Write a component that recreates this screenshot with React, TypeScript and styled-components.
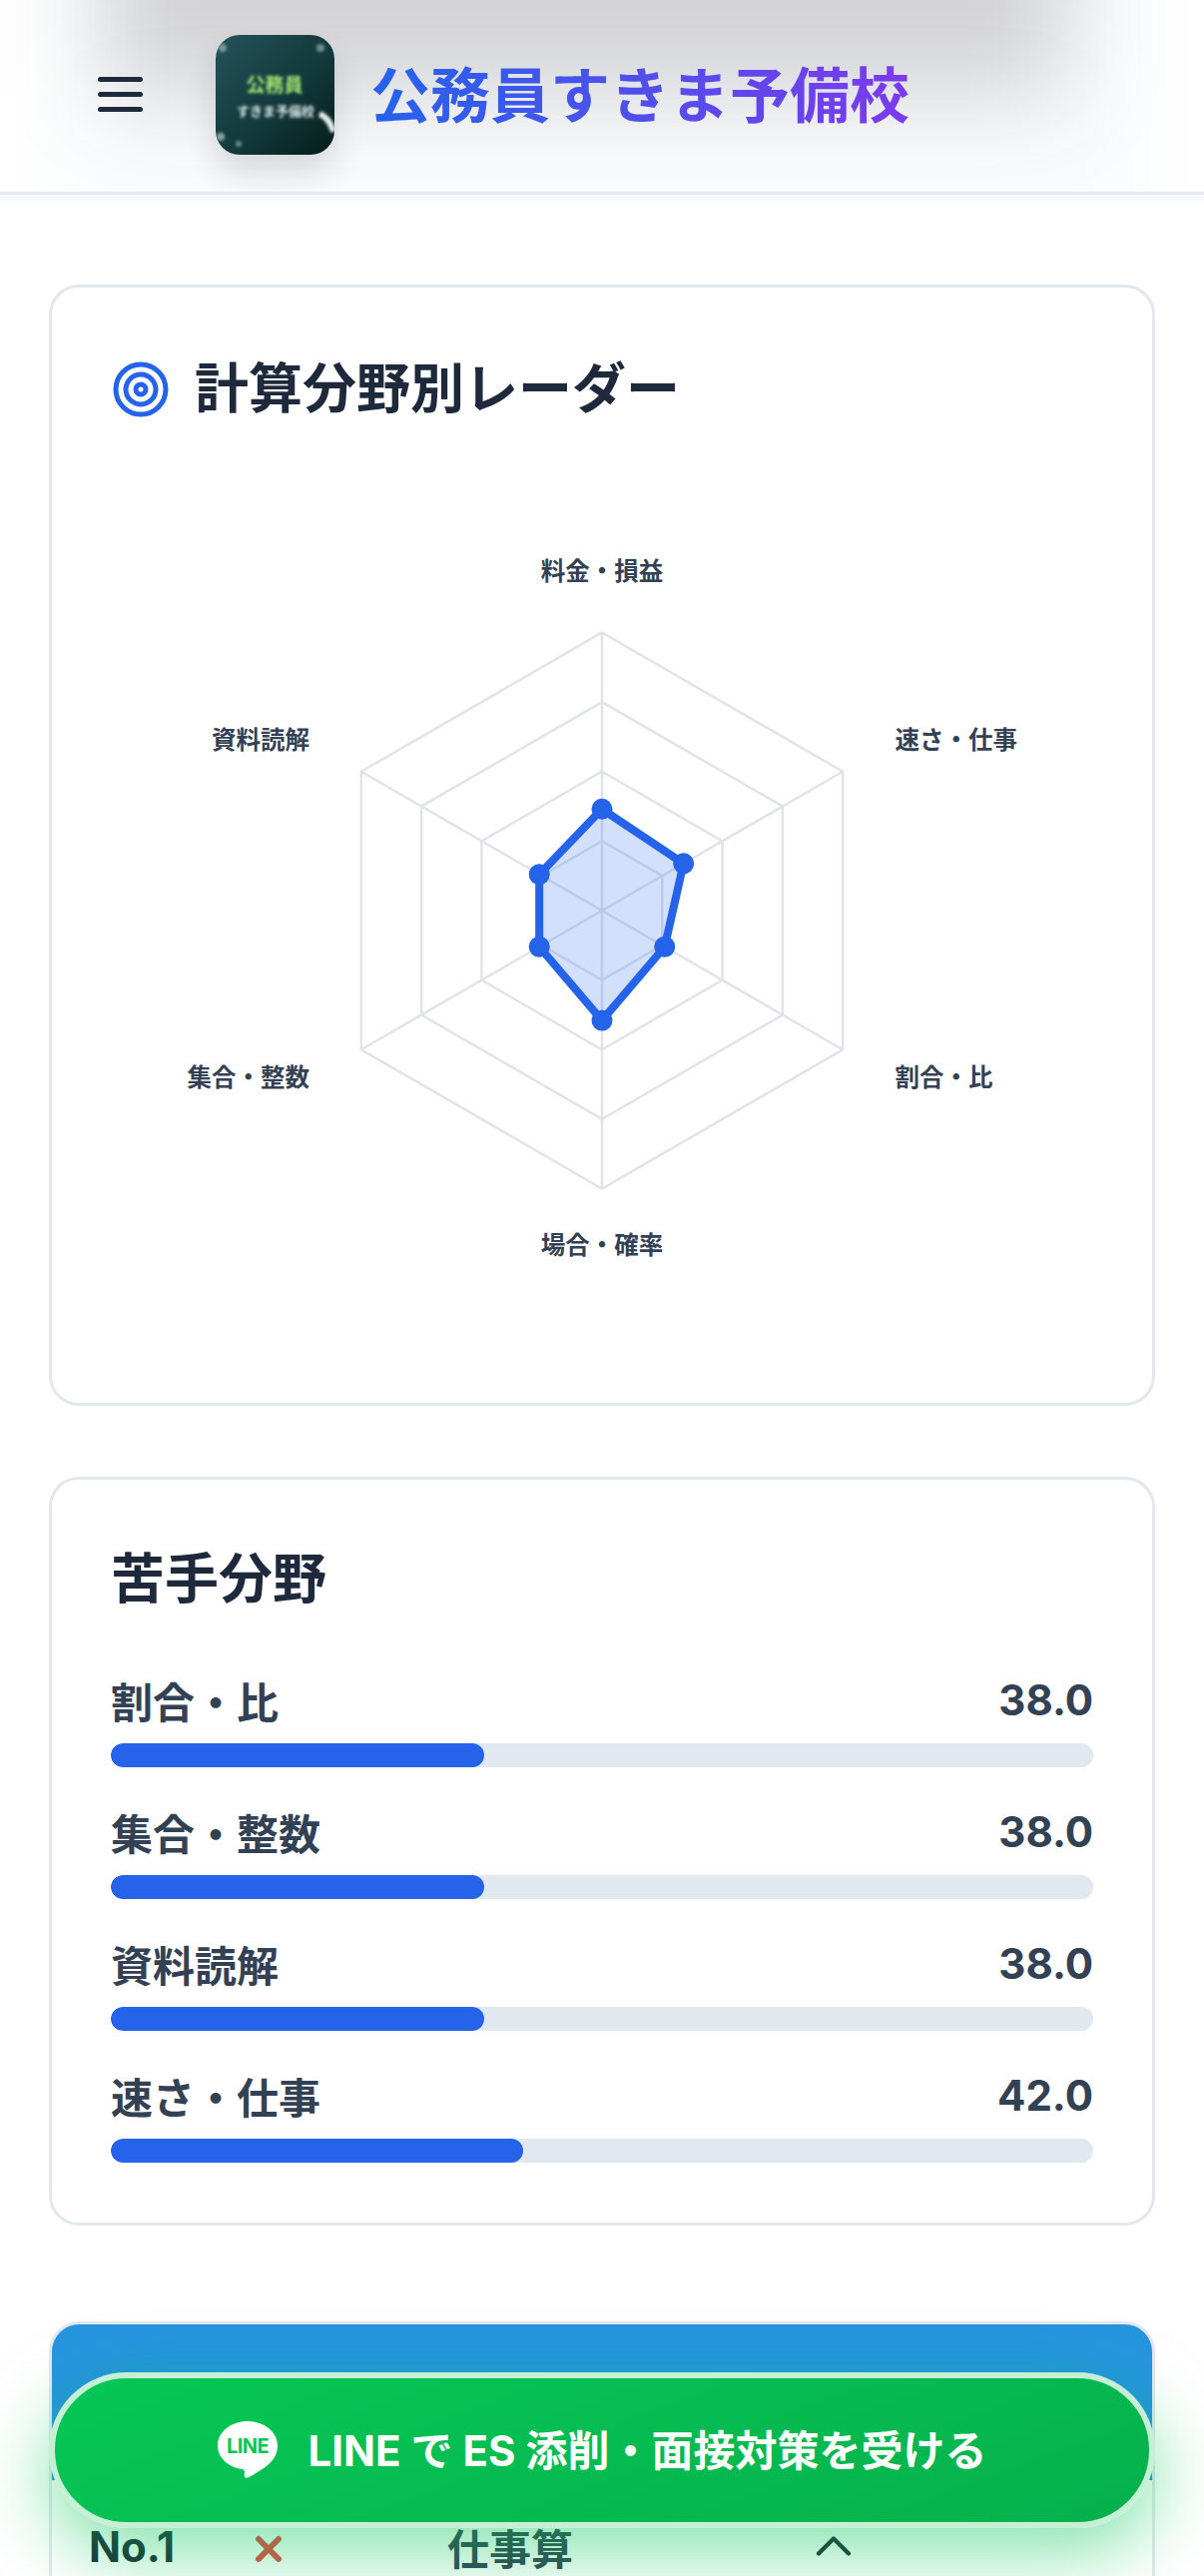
import React from "react";
import styled, { createGlobalStyle } from "styled-components";
import { ChevronUp, Target, X } from "lucide-react";

const FONT = `Inter, "Noto Sans CJK JP", "Noto Sans", sans-serif`;

const GlobalStyle = createGlobalStyle`
  * {
    box-sizing: border-box;
  }

  html,
  body {
    margin: 0;
    height: 100%;
    overflow: hidden;
    background: #ffffff;
  }

  body {
    font-family: ${FONT};
  }
`;

const Page = styled.div`
  position: relative;
  height: 2580px;
  overflow: hidden;
  background: #ffffff;
`;

const Header = styled.header`
  position: relative;
  height: 195px;
  padding: 0 0 3px 98px;
  display: flex;
  align-items: center;
  overflow: hidden;
  background: linear-gradient(90deg, #ffffff, #fafbfd 12%, #fafbfd 90%, #ffffff);
  border-bottom: 3px solid #e6e8ec;
`;

// blurred shadow of whatever scrolled up behind the header
const HeaderGlow = styled.div`
  position: absolute;
  top: -130px;
  left: 100px;
  right: 136px;
  height: 225px;
  background: rgba(40, 42, 48, 0.19);
  filter: blur(48px);
`;

const HeaderFade = styled.div`
  height: 14px;
  background: linear-gradient(#f6f7f8, #ffffff);
`;

const MenuButton = styled.button`
  position: relative;
  width: 45px;
  height: 35px;
  padding: 0;
  border: 0;
  background: none;
  display: flex;
  flex-direction: column;
  justify-content: space-between;

  span {
    display: block;
    height: 5px;
    border-radius: 3px;
    background: #1e293b;
  }
`;

const LogoBox = styled.div`
  position: relative;
  width: 119px;
  height: 120px;
  margin-left: 73px;
  border-radius: 24px;
  overflow: hidden;
  box-shadow: 0 18px 30px rgba(20, 30, 40, 0.14);
  flex-shrink: 0;

  svg {
    display: block;
  }
`;

const BrandTitle = styled.h1`
  position: relative;
  margin: 2px 0 0 36px;
  font-size: 60px;
  line-height: 1.2;
  font-weight: 700;
  white-space: nowrap;
  background: linear-gradient(90deg, #2563eb, #7c3aed);
  -webkit-background-clip: text;
  background-clip: text;
  color: transparent;
`;

const Main = styled.main`
  padding: 76px 49px 0;
`;

const Card = styled.section<{ $gap?: number }>`
  margin-top: ${(p) => p.$gap ?? 0}px;
  padding: 60px 59px;
  background: #ffffff;
  border: 3px solid #e2e8f0;
  border-radius: 30px;
`;

const CardTitleRow = styled.div`
  display: flex;
  align-items: center;
  gap: 24px;
  height: 84px;
  color: #2563eb;
`;

const CardTitle = styled.h2`
  margin: 0;
  font-size: 54px;
  line-height: 80px;
  font-weight: 700;
  color: #1e293b;
`;

const RadarSvg = styled.svg`
  display: block;
  width: 984px;
  height: 913px;
`;

const RadarLabel = styled.text`
  font-family: ${FONT};
  font-size: 24.5px;
  font-weight: 700;
  fill: #334155;
`;

const WeakList = styled.div`
  margin-top: 49px;
  display: flex;
  flex-direction: column;
  gap: 33px;
`;

const WeakHead = styled.div`
  display: flex;
  justify-content: space-between;
  align-items: center;
  height: 63px;
  font-size: 42px;
  font-weight: 700;
  color: #334155;
`;

const BarTrack = styled.div`
  margin-top: 12px;
  height: 24px;
  border-radius: 12px;
  overflow: hidden;
  background: #e2e8f0;
`;

const BarFill = styled.div`
  height: 100%;
  border-radius: 12px;
  background: #2563eb;
`;

const RankCard = styled.section`
  margin-top: 96px;
  height: 400px;
  background: #ffffff;
  border: 3px solid #e2e8f0;
  border-radius: 30px;
  overflow: hidden;
`;

const RankBanner = styled.div`
  height: 156px;
  background: #2694e0;
`;

const RankRow = styled.div`
  display: flex;
  align-items: center;
  height: 132px;
  padding-left: 37px;
  color: #1e293b;
`;

const RankNo = styled.span`
  width: 160px;
  font-size: 42px;
  font-weight: 700;
`;

const RankMark = styled.span`
  width: 199px;
  display: flex;
  margin-top: 6px;
  color: #ef4444;
`;

const RankName = styled.span`
  width: 357px;
  font-size: 42px;
  font-weight: 700;
  color: #334155;
`;

const RankToggle = styled.span`
  display: flex;
`;

const LineButton = styled.a`
  position: absolute;
  left: 49px;
  right: 49px;
  bottom: 48px;
  height: 156px;
  display: flex;
  align-items: center;
  justify-content: center;
  gap: 31px;
  border: 6px solid #c6f0d5;
  border-radius: 78px;
  background: linear-gradient(160deg, #06c755, #06b04c);
  box-shadow: 0 24px 72px rgba(6, 199, 85, 0.5);
  color: #ffffff;
  font-size: 42px;
  font-weight: 700;
  white-space: nowrap;

  span {
    margin-top: -6px;
  }
`;

const LineWord = styled.text`
  font-family: ${FONT};
  font-size: 20px;
  font-weight: 700;
  letter-spacing: -0.6px;
  fill: #06c755;
`;

const Logo = () => (
  <svg width="119" height="120" viewBox="0 0 119 120">
    <defs>
      <linearGradient id="logoBg" x1="0" y1="0" x2="1" y2="1">
        <stop offset="0" stopColor="#25525a" />
        <stop offset="0.55" stopColor="#12393b" />
        <stop offset="1" stopColor="#051d18" />
      </linearGradient>
      <filter id="soft">
        <feGaussianBlur stdDeviation="1.7" />
      </filter>
    </defs>
    <rect width="119" height="120" fill="url(#logoBg)" />
    <g filter="url(#soft)">
      <text x="59" y="57" textAnchor="middle" fontSize="19" fontWeight="700" fontFamily="Noto Sans CJK JP" fill="#a4ea72">
        公務員
      </text>
      <text x="60" y="81" textAnchor="middle" fontSize="13" fontWeight="700" fontFamily="Noto Sans CJK JP" fill="#dbe6e6">
        すきま予備校
      </text>
      <path d="M104 79 q10 4 14 18" fill="none" stroke="#e4eeec" strokeWidth="6" />
      <circle cx="7" cy="13" r="4" fill="#7d9a9a" />
      <circle cx="105" cy="13" r="4" fill="#6f8d8b" />
      <circle cx="5" cy="102" r="4" fill="#8aa5a3" />
      <circle cx="23" cy="109" r="3" fill="#6f8d8b" />
    </g>
  </svg>
);

const LineLogo = () => (
  <svg width="60" height="58" viewBox="0 0 60 58">
    <path
      d="M30 0C13.4 0 0 10.8 0 24.2c0 12 10.4 21.8 24.6 23.8 1 .2 2 .6 2.2 1.600.2.8 0 2.600-.1 4-.1 1 .1 4.200 3 3 4-1.700 14-7.500 20-12.400C56.400 39 60 32 60 24.200 60 10.800 46.600 0 30 0Z"
      fill="#ffffff"
    />
    <LineWord x="30" y="32" textAnchor="middle">LINE</LineWord>
  </svg>
);

const CX = 492;
const CY = 480;
const R = 278.5;

const axisPoint = (i: number, r: number) => {
  const a = (Math.PI / 3) * i;
  return [CX + r * Math.sin(a), CY - r * Math.cos(a)];
};

const ring = (r: number) =>
  [0, 1, 2, 3, 4, 5].map((i) => axisPoint(i, r).join(",")).join(" ");

// radius in px for each axis, clockwise from the top
const radarValues = [101.7, 94.3, 72.5, 110, 72.5, 72.5];

const radarLabels = [
  { text: "料金・損益", x: 492, y: 139.5, anchor: "middle" },
  { text: "速さ・仕事", x: 785.5, y: 308.5, anchor: "start" },
  { text: "割合・比", x: 785.5, y: 647, anchor: "start" },
  { text: "場合・確率", x: 492, y: 815, anchor: "middle" },
  { text: "集合・整数", x: 199, y: 647, anchor: "end" },
  { text: "資料読解", x: 199, y: 308.5, anchor: "end" },
];

const Radar = () => {
  const points = radarValues.map((r, i) => axisPoint(i, r));
  return (
    <RadarSvg viewBox="0 0 984 913">
      {[0.25, 0.5, 0.75, 1].map((f) => (
        <polygon key={f} points={ring(R * f)} fill="none" stroke="#e0e4ea" strokeWidth="2.5" />
      ))}
      {[0, 1, 2, 3, 4, 5].map((i) => {
        const [x, y] = axisPoint(i, R);
        return <line key={i} x1={CX} y1={CY} x2={x} y2={y} stroke="#e0e4ea" strokeWidth="2.5" />;
      })}
      <polygon
        points={points.map((p) => p.join(",")).join(" ")}
        fill="rgba(37, 99, 235, 0.2)"
        stroke="#2563eb"
        strokeWidth="8"
        strokeLinejoin="round"
      />
      {points.map(([x, y], i) => (
        <circle key={i} cx={x} cy={y} r="10.5" fill="#2563eb" />
      ))}
      {radarLabels.map((l) => (
        <RadarLabel key={l.text} x={l.x} y={l.y} textAnchor={l.anchor} dominantBaseline="central">
          {l.text}
        </RadarLabel>
      ))}
    </RadarSvg>
  );
};

const weakAreas = [
  { name: "割合・比", score: 38 },
  { name: "集合・整数", score: 38 },
  { name: "資料読解", score: 38 },
  { name: "速さ・仕事", score: 42 },
];

const App = () => {
  return (
    <Page>
      <GlobalStyle />
      <Header>
        <HeaderGlow />
        <MenuButton aria-label="menu">
          <span />
          <span />
          <span />
        </MenuButton>
        <LogoBox>
          <Logo />
        </LogoBox>
        <BrandTitle>公務員すきま予備校</BrandTitle>
      </Header>
      <HeaderFade />
      <Main>
        <Card>
          <CardTitleRow>
            <Target size={60} strokeWidth={2} />
            <CardTitle>計算分野別レーダー</CardTitle>
          </CardTitleRow>
          <Radar />
        </Card>
        <Card $gap={71}>
          <CardTitle>苦手分野</CardTitle>
          <WeakList>
            {weakAreas.map((w) => (
              <div key={w.name}>
                <WeakHead>
                  <span>{w.name}</span>
                  <span>{w.score.toFixed(1)}</span>
                </WeakHead>
                <BarTrack>
                  <BarFill style={{ width: `${w.score}%` }} />
                </BarTrack>
              </div>
            ))}
          </WeakList>
        </Card>
        <RankCard>
          <RankBanner />
          <RankRow>
            <RankNo>No.1</RankNo>
            <RankMark>
              <X size={40} strokeWidth={3.6} />
            </RankMark>
            <RankName>仕事算</RankName>
            <RankToggle>
              <ChevronUp size={60} strokeWidth={1.7} />
            </RankToggle>
          </RankRow>
        </RankCard>
      </Main>
      <LineButton>
        <LineLogo />
        <span>LINE で ES 添削・面接対策を受ける</span>
      </LineButton>
    </Page>
  );
};

export default App;
